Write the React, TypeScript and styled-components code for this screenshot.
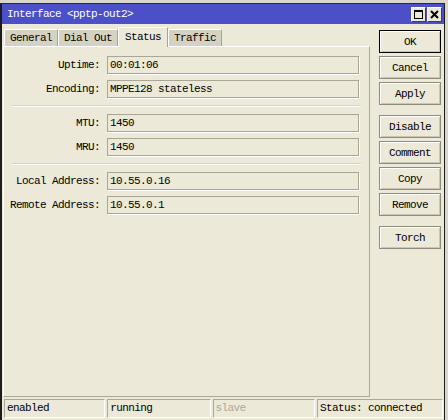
import styled, { createGlobalStyle } from "styled-components";

const GlobalStyle = createGlobalStyle`
  html, body {
    margin: 0;
    padding: 0;
    background: #d9d6cc;
  }
  body {
    font-family: "Liberation Mono", "DejaVu Sans Mono", monospace;
    font-size: 11px;
    letter-spacing: -0.6px;
    color: #000;
  }
`;

const Window = styled.div`
  margin-top: 3px;
  width: 445px;
  height: 417px;
  box-sizing: border-box;
  background: #ece9d8;
  border-top: 1px solid #2a2a2a;
  border-left: 2px solid #1c1c1c;
  border-right: 1px solid #1c1c1c;
  display: flex;
  flex-direction: column;
`;

const TitleBar = styled.div`
  height: 20px;
  background: #4b50c8;
  display: flex;
  align-items: center;
  justify-content: space-between;
  padding: 0 2px 0 5px;
`;

const Title = styled.span`
  color: #fff;
`;

const TitleButtons = styled.div`
  display: flex;
  gap: 1px;
`;

const TitleButton = styled.div`
  width: 15px;
  height: 15px;
  box-sizing: border-box;
  background: #ece9d8;
  border: 1px solid #404040;
  border-top-color: #fff;
  border-left-color: #fff;
  display: flex;
  align-items: center;
  justify-content: center;
`;

const Body = styled.div`
  flex: 1;
  display: flex;
  gap: 9px;
  padding: 3px 0 0 1px;
`;

const Main = styled.div`
  width: 367px;
  display: flex;
  flex-direction: column;
`;

const TabRow = styled.div`
  height: 20px;
  display: flex;
  align-items: flex-end;
  padding-left: 1px;
  position: relative;
  z-index: 1;
  margin-bottom: -1px;
`;

const Tab = styled.div<{ active?: boolean }>`
  height: ${(p) => (p.active ? "20px" : "17px")};
  box-sizing: border-box;
  padding: ${(p) => (p.active ? "2px 6px 0" : "1px 5px 0")};
  margin-bottom: ${(p) => (p.active ? "0" : "1px")};
  background: ${(p) => (p.active ? "#ece9d8" : "#d6d2c2")};
  border-top: 1px solid #fff;
  border-left: 1px solid #fff;
  border-right: 1px solid #a5a294;
  line-height: 15px;
  white-space: pre;
`;

const Panel = styled.div`
  height: 351px;
  box-sizing: border-box;
  border: 1px solid #aca899;
  border-top-color: #fff;
  border-left-color: #fff;
  padding-top: 9px;
  display: flex;
  flex-direction: column;
`;

const Group = styled.div`
  display: flex;
  flex-direction: column;
  gap: 6px;
`;

const Row = styled.div`
  display: grid;
  grid-template-columns: 96px 252px;
  column-gap: 7px;
  align-items: center;
`;

const Label = styled.span`
  text-align: right;
  white-space: pre;
`;

const Field = styled.div`
  height: 18px;
  box-sizing: border-box;
  border: 1px solid #a9a696;
  box-shadow: 1px 1px 0 #fff;
  padding: 0 2px;
  line-height: 16px;
  white-space: pre;
`;

const Separator = styled.div`
  margin: 7px 8px 7px 8px;
  height: 1px;
  background: #d6d3c4;
  border-bottom: 1px solid #fbfaf5;
`;

const Buttons = styled.div`
  width: 62px;
  margin-top: 3px;
  display: flex;
  flex-direction: column;
  gap: 3px;
`;

const Button = styled.div<{ primary?: boolean; spaced?: boolean }>`
  height: 23px;
  box-sizing: border-box;
  margin-top: ${(p) => (p.spaced ? "7px" : "0")};
  border: 1px solid ${(p) => (p.primary ? "#000" : "#8f8c7e")};
  box-shadow: inset 1px 1px 0 #fff, inset -1px -1px 0 #c9c6b6;
  background: #ece9d8;
  display: flex;
  align-items: center;
  justify-content: center;
`;

const StatusBar = styled.div`
  display: flex;
  gap: 2px;
  padding: 0 1px 2px 2px;
`;

const StatusCell = styled.div<{ width: number; muted?: boolean }>`
  width: ${(p) => p.width}px;
  height: 19px;
  box-sizing: border-box;
  border: 1px solid #aca899;
  border-right-color: #fff;
  border-bottom-color: #fff;
  padding: 0 2px;
  line-height: 17px;
  color: ${(p) => (p.muted ? "#aca899" : "#000")};
  white-space: pre;
`;

const fields: [string, string][][] = [
  [
    ["Uptime:", "00:01:06"],
    ["Encoding:", "MPPE128 stateless"],
  ],
  [
    ["MTU:", "1450"],
    ["MRU:", "1450"],
  ],
  [
    ["Local Address:", "10.55.0.16"],
    ["Remote Address:", "10.55.0.1"],
  ],
];

const actions = [
  { text: "OK", primary: true },
  { text: "Cancel" },
  { text: "Apply" },
  { text: "Disable", spaced: true },
  { text: "Comment" },
  { text: "Copy" },
  { text: "Remove" },
  { text: "Torch", spaced: true },
];

function App() {
  return (
    <>
      <GlobalStyle />
      <Window>
        <TitleBar>
          <Title>Interface &lt;pptp-out2&gt;</Title>
          <TitleButtons>
            <TitleButton>
              <svg width="9" height="9" viewBox="0 0 9 9">
                <rect x="0.5" y="0.5" width="8" height="8" fill="none" stroke="#000" />
                <rect x="0" y="0" width="9" height="2" fill="#000" />
              </svg>
            </TitleButton>
            <TitleButton>
              <svg width="9" height="9" viewBox="0 0 9 9">
                <path d="M1 1 L8 8 M8 1 L1 8" stroke="#000" strokeWidth="2" />
              </svg>
            </TitleButton>
          </TitleButtons>
        </TitleBar>
        <Body>
          <Main>
            <TabRow>
              <Tab>General</Tab>
              <Tab>Dial Out</Tab>
              <Tab active>Status</Tab>
              <Tab>Traffic</Tab>
            </TabRow>
            <Panel>
              {fields.map((group, i) => (
                <div key={i}>
                  {i > 0 && <Separator />}
                  <Group>
                    {group.map(([label, value]) => (
                      <Row key={label}>
                        <Label>{label}</Label>
                        <Field>{value}</Field>
                      </Row>
                    ))}
                  </Group>
                </div>
              ))}
            </Panel>
          </Main>
          <Buttons>
            {actions.map((a) => (
              <Button key={a.text} primary={a.primary} spaced={a.spaced}>
                {a.text}
              </Button>
            ))}
          </Buttons>
        </Body>
        <StatusBar>
          <StatusCell width={102}>enabled</StatusCell>
          <StatusCell width={104}>running</StatusCell>
          <StatusCell width={103} muted>
            slave
          </StatusCell>
          <StatusCell width={127}>Status: connected</StatusCell>
        </StatusBar>
      </Window>
    </>
  );
}

export default App;
